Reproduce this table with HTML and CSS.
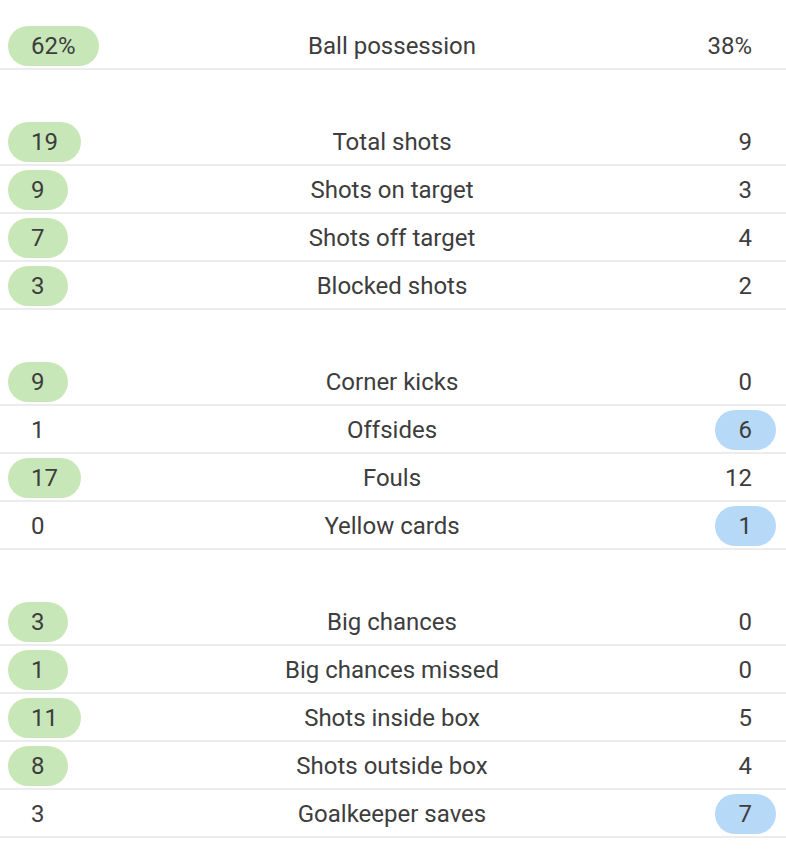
FILE: index.html
```html
<!DOCTYPE html>
<html>
<head>
<meta charset="utf-8">
<link rel="stylesheet" href="styles.css">
</head>
<body>
<div class="stats">
  <div class="group">
    <div class="row"><span class="val hl-home">62%</span><span class="label">Ball possession</span><span class="val away">38%</span></div>
  </div>
  <div class="group">
    <div class="row"><span class="val hl-home">19</span><span class="label">Total shots</span><span class="val away">9</span></div>
    <div class="row"><span class="val hl-home">9</span><span class="label">Shots on target</span><span class="val away">3</span></div>
    <div class="row"><span class="val hl-home">7</span><span class="label">Shots off target</span><span class="val away">4</span></div>
    <div class="row"><span class="val hl-home">3</span><span class="label">Blocked shots</span><span class="val away">2</span></div>
  </div>
  <div class="group">
    <div class="row"><span class="val hl-home">9</span><span class="label">Corner kicks</span><span class="val away">0</span></div>
    <div class="row"><span class="val">1</span><span class="label">Offsides</span><span class="val away hl-away">6</span></div>
    <div class="row"><span class="val hl-home">17</span><span class="label">Fouls</span><span class="val away">12</span></div>
    <div class="row"><span class="val">0</span><span class="label">Yellow cards</span><span class="val away hl-away">1</span></div>
  </div>
  <div class="group">
    <div class="row"><span class="val hl-home">3</span><span class="label">Big chances</span><span class="val away">0</span></div>
    <div class="row"><span class="val hl-home">1</span><span class="label">Big chances missed</span><span class="val away">0</span></div>
    <div class="row"><span class="val hl-home">11</span><span class="label">Shots inside box</span><span class="val away">5</span></div>
    <div class="row"><span class="val hl-home">8</span><span class="label">Shots outside box</span><span class="val away">4</span></div>
    <div class="row"><span class="val">3</span><span class="label">Goalkeeper saves</span><span class="val away hl-away">7</span></div>
  </div>
</div>
</body>
</html>
```
FILE: styles.css
```css
html, body {
  margin: 0;
  padding: 0;
  background: #ffffff;
}
body {
  font-family: Roboto, "Liberation Sans", sans-serif;
  color: #3d3d3d;
  font-size: 24px;
}
.stats {
  padding-top: 22px;
  display: flex;
  flex-direction: column;
  gap: 48px;
}
.group {
  display: flex;
  flex-direction: column;
}
.row {
  display: grid;
  grid-template-columns: 1fr auto 1fr;
  grid-template-rows: 40px;
  align-items: center;
  padding: 4px 10px 2px 8px;
  border-bottom: 2px solid #ececec;
}
.val {
  justify-self: start;
  height: 40px;
  line-height: 40px;
  box-sizing: border-box;
  padding: 0 23px;
  text-align: center;
  border-radius: 20px;
}
.val.away {
  justify-self: end;
  padding: 0 24px;
}
.label {
  text-align: center;
  white-space: nowrap;
  line-height: 40px;
}
.hl-home {
  background: #c8e7b9;
}
.hl-away {
  background: #b6d9f8;
}
```
